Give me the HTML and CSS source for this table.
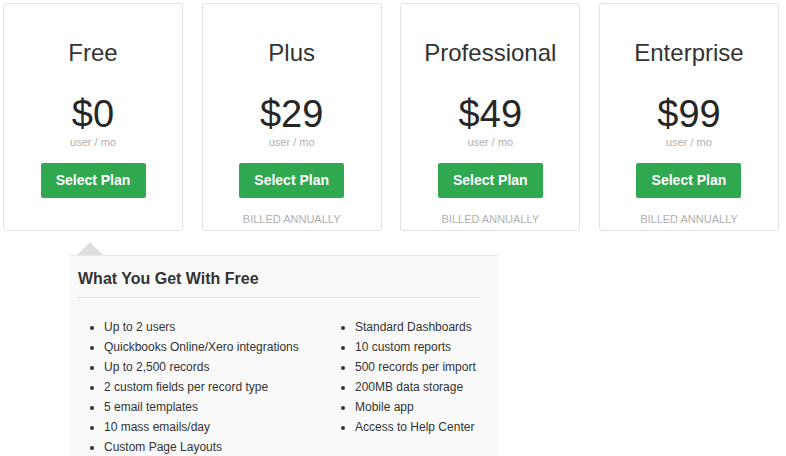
FILE: index.html
```html
<!DOCTYPE html>
<html>
<head>
<meta charset="utf-8">
<link rel="stylesheet" href="styles.css">
</head>
<body>
<div class="plans">
  <div class="card">
    <div class="title">Free</div>
    <div class="price">$0</div>
    <div class="unit">user / mo</div>
    <a class="btn">Select Plan</a>
  </div>
  <div class="card">
    <div class="title">Plus</div>
    <div class="price">$29</div>
    <div class="unit">user / mo</div>
    <a class="btn">Select Plan</a>
    <div class="billed">BILLED ANNUALLY</div>
  </div>
  <div class="card">
    <div class="title">Professional</div>
    <div class="price">$49</div>
    <div class="unit">user / mo</div>
    <a class="btn">Select Plan</a>
    <div class="billed">BILLED ANNUALLY</div>
  </div>
  <div class="card">
    <div class="title">Enterprise</div>
    <div class="price">$99</div>
    <div class="unit">user / mo</div>
    <a class="btn">Select Plan</a>
    <div class="billed">BILLED ANNUALLY</div>
  </div>
</div>
<div class="details">
  <h3 class="details-head">What You Get With Free</h3>
  <div class="cols">
    <ul class="list">
      <li>Up to 2 users</li>
      <li>Quickbooks Online/Xero integrations</li>
      <li>Up to 2,500 records</li>
      <li>2 custom fields per record type</li>
      <li>5 email templates</li>
      <li>10 mass emails/day</li>
      <li>Custom Page Layouts</li>
    </ul>
    <ul class="list">
      <li>Standard Dashboards</li>
      <li>10 custom reports</li>
      <li>500 records per import</li>
      <li>200MB data storage</li>
      <li>Mobile app</li>
      <li>Access to Help Center</li>
    </ul>
  </div>
</div>
</body>
</html>
```
FILE: styles.css
```css
html, body {
  margin: 0;
  padding: 0;
  background: #fff;
  font-family: "Liberation Sans", Arial, sans-serif;
  overflow: hidden;
}
body {
  height: 456px;
}
.plans {
  display: flex;
  gap: 18.67px;
  padding: 3px 0 0 3px;
}
.card {
  width: 178px;
  border: 1px solid #e2e2e2;
  border-radius: 3px;
  display: flex;
  flex-direction: column;
  align-items: center;
  padding-top: 35px;
  box-sizing: content-box;
  height: 191px;
}
.title {
  font-size: 24px;
  line-height: 28px;
  color: #333;
}
.price {
  margin-top: 27px;
  font-size: 38px;
  line-height: 40px;
  color: #262626;
}
.unit {
  margin-top: 2px;
  font-size: 11px;
  line-height: 13px;
  color: #b0b0b0;
}
.btn {
  margin-top: 14px;
  width: 105px;
  height: 35px;
  line-height: 35px;
  text-align: center;
  background: #2fa84f;
  border-radius: 2px;
  color: #fff;
  font-weight: bold;
  font-size: 14px;
}
.billed {
  margin-top: 15px;
  font-size: 11px;
  line-height: 13px;
  color: #b0b0b0;
}
.details {
  position: relative;
  margin: 24px 0 0 70px;
  width: 428px;
  height: 202px;
  background: #f9f9f9;
  border-top: 1px solid #e6e6e6;
  padding-top: 13px;
  box-sizing: border-box;
}
.details::before {
  content: "";
  position: absolute;
  left: 7px;
  top: -14px;
  border-left: 13px solid transparent;
  border-right: 13px solid transparent;
  border-bottom: 13px solid #dedede;
}
.details-head {
  margin: 0 18px 0 8px;
  font-size: 16px;
  line-height: 20px;
  font-weight: bold;
  color: #333;
  padding-bottom: 8px;
  border-bottom: 1px solid #e6e6e6;
}
.cols {
  display: grid;
  grid-template-columns: 251px auto;
  padding: 19px 0 0 34px;
}
.list {
  margin: 0;
  padding: 0;
  list-style: disc;
}
.list li {
  font-size: 12px;
  line-height: 20px;
  color: #333;
}
```
